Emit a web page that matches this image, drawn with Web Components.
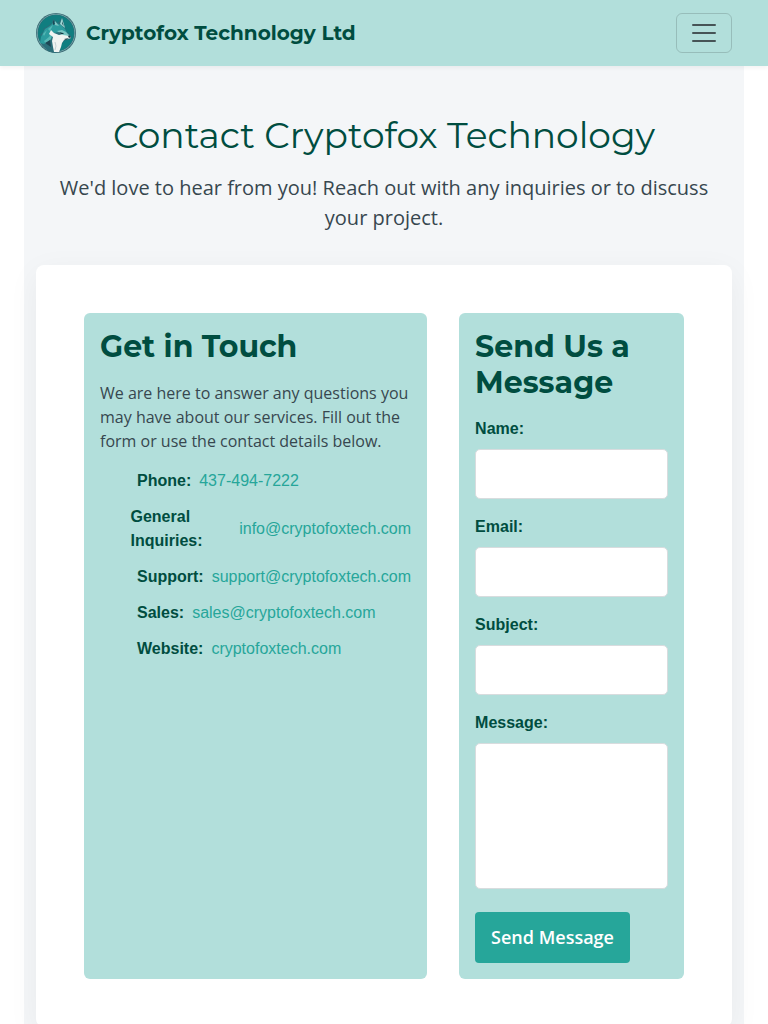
<!DOCTYPE html>
<html lang="en">
<head>
<meta charset="utf-8">
<meta name="viewport" content="width=device-width, initial-scale=1">
<title>Contact Cryptofox Technology</title>
<style>
  :root {
    --mint: #b2dfdb;
    --teal: #26a69a;
    --deep: #004d40;
    --ink: #37474f;
    --heading: Montserrat, "Open Sans", sans-serif;
    --body: "Open Sans", sans-serif;
    --plain: "Liberation Sans", Arial, sans-serif;
  }
  body { margin: 0; background: #fff; color: var(--ink); font: 16px/24px var(--plain); }
</style>
</head>
<body>
<site-header brand="Cryptofox Technology Ltd"></site-header>
<contact-page>
  <span slot="title">Contact Cryptofox Technology</span>
  <span slot="lead">We'd love to hear from you! Reach out with any inquiries or to discuss your project.</span>
  <info-panel heading="Get in Touch">
    <contact-details></contact-details>
  </info-panel>
  <info-panel heading="Send Us a Message">
    <message-form></message-form>
  </info-panel>
</contact-page>

<script>
  const define = (name, html, setup) => {
    const template = document.createElement('template');
    template.innerHTML = html;
    customElements.define(name, class extends HTMLElement {
      constructor() {
        super();
        this.attachShadow({ mode: 'open' }).append(template.content.cloneNode(true));
      }
      connectedCallback() { if (setup) setup(this, this.shadowRoot); }
    });
  };

  define('fox-logo', `
    <style>
      :host { display: block; width: 40px; height: 40px; }
      svg { display: block; width: 100%; height: 100%; }
    </style>
    <svg viewBox="0 0 40 40" role="img" aria-label="Fox logo">
      <circle cx="20" cy="20" r="20" fill="#3b6872"/>
      <circle cx="20" cy="20" r="18.8" fill="none" stroke="#7bb3b6" stroke-width=".8"/>
      <circle cx="20" cy="20" r="18" fill="#107e80"/>
      <path d="M4 27l2-4-2-1 4-4-1-2 5-3 4-3 1-4 5 4 4-5 3 9 2 5 4 4-1 3-6 2-3 4-1 6-5 2-7-2-6-6z" fill="#2b6f7a"/>
      <path d="M5 24l4-8 5-3 4-4 7 3 4 4 2 4-8-1-5 1-3 6-7 5-4-1z" fill="#2c9c9e"/>
      <path d="M8 28l5-4 3-5-1 7-5 5zM7 21l4-4-3 6zM12 16l5-4-3 6z" fill="#56b8b5"/>
      <path d="M9 30l5-3 1 7zM17 7l2 4-2 1z" fill="#1d4654"/>
      <path d="M19 8l4 5-4-1z" fill="#7fc4c3"/>
      <path d="M26 5l3 10-5-4z" fill="#9ed6d3"/>
      <path d="M26 8l2 5-2-2z" fill="#34626d"/>
      <path d="M15 17l3 3 5 2 4-1 7 2 1 2-3 1-4 1-2 3-1 4-2 5-5 0-1-5-1-6 1-4-4-3z" fill="#f0f4f2"/>
      <path d="M21 18l5-1 4 2 4 4-7-1z" fill="#7ac6c3"/>
      <path d="M23 19l4 1 1 1-3 0z" fill="#123844"/>
      <path d="M33 22l2 2-1 1-2-1zM28 26l5-1-3 2z" fill="#163b47"/>
      <path d="M19 29l1 4-1 4" fill="none" stroke="#a5b8bc" stroke-width=".6"/>
    </svg>`);

  define('site-header', `
    <style>
      :host { display: block; position: relative; background: var(--mint); box-shadow: 0 2px 4px rgba(0,0,0,.05); }
      nav { display: flex; align-items: center; justify-content: space-between; box-sizing: border-box;
            max-width: 720px; min-height: 66px; margin: 0 auto; padding: 8px 12px; }
      a { display: flex; align-items: center; gap: 10px; color: var(--deep); text-decoration: none;
          font: 700 20px/30px var(--heading); }
      button { display: flex; align-items: center; justify-content: center; box-sizing: border-box;
               width: 56px; height: 40px; padding: 0; background: transparent;
               border: 1px solid rgba(0,0,0,.15); border-radius: 6px; }
      svg { width: 30px; height: 30px; }
    </style>
    <nav aria-label="Main">
      <a href="#"><fox-logo></fox-logo><span class="brand"></span></a>
      <button type="button" aria-label="Toggle navigation">
        <svg viewBox="0 0 30 30" aria-hidden="true"><path d="M4 7h22M4 15h22M4 23h22" fill="none" stroke="rgba(33,37,41,.75)" stroke-width="2" stroke-linecap="round"/></svg>
      </button>
    </nav>`, (host, root) => {
      root.querySelector('.brand').textContent = host.getAttribute('brand');
    });

  define('contact-page', `
    <style>
      :host { display: block; }
      main { box-sizing: border-box; max-width: 720px; margin: 0 auto; padding: 48px 12px; background: #f4f6f8; }
      header { text-align: center; padding: 0 16px; margin-bottom: 32px; }
      h1 { margin: 0 0 16px; color: var(--deep); font: 400 36px/43px var(--heading); }
      p { margin: 0; font: 400 20px/30px var(--body); }
      section { display: grid; grid-template-columns: 1fr 1fr; gap: 32px; padding: 48px;
                background: #fff; border-radius: 8px; box-shadow: 0 8px 32px rgba(0,0,0,.05); }
    </style>
    <main>
      <header>
        <h1><slot name="title"></slot></h1>
        <p><slot name="lead"></slot></p>
      </header>
      <section><slot></slot></section>
    </main>`);

  define('info-panel', `
    <style>
      :host { display: block; padding: 16px; background: var(--mint); border-radius: 6px; }
      h2 { margin: 0 0 16px; color: var(--deep); font: 700 30px/36px var(--heading); }
    </style>
    <h2></h2>
    <slot></slot>`, (host, root) => {
      root.querySelector('h2').textContent = host.getAttribute('heading');
    });

  define('contact-details', `
    <style>
      :host { display: block; }
      p { margin: 0 0 16px; font: 400 16px/24px var(--body); }
      ul { display: flex; flex-direction: column; gap: 12px; margin: 0; padding: 0; list-style: none; }
      li { display: flex; align-items: center; }
      i { width: 25px; margin-right: 12px; }
      strong { margin-right: 8px; color: var(--deep); }
      a { color: var(--teal); text-decoration: none; }
      .phone { white-space: nowrap; }
    </style>
    <p>We are here to answer any questions you may have about our services. Fill out the form or use the contact details below.</p>
    <ul>
      <li><i></i><strong>Phone:</strong><a class="phone" href="tel:437-494-7222">437-494-7222</a></li>
      <li><i></i><strong>General Inquiries:</strong><a href="mailto:info@cryptofoxtech.com">info@cryptofoxtech.com</a></li>
      <li><i></i><strong>Support:</strong><a href="mailto:support@cryptofoxtech.com">support@cryptofoxtech.com</a></li>
      <li><i></i><strong>Sales:</strong><a href="mailto:sales@cryptofoxtech.com">sales@cryptofoxtech.com</a></li>
      <li><i></i><strong>Website:</strong><a href="#">cryptofoxtech.com</a></li>
    </ul>`);

  define('message-form', `
    <style>
      :host { display: block; }
      form { display: flex; flex-direction: column; }
      label { margin-bottom: 8px; color: var(--deep); font-weight: 700; }
      input, textarea { display: block; box-sizing: border-box; width: 100%; min-width: 0; margin: 0 0 16px; padding: 12px;
                        background: #fff; border: 1px solid #d8dcde; border-radius: 5px; font: 16px/24px var(--plain); }
      input { height: 50px; }
      textarea { height: 146px; margin-bottom: 23px; resize: none; }
      button { align-self: flex-start; padding: 12px 16px; color: #fff; background: var(--teal);
               border: 0; border-radius: 4px; font: 600 18px/27px var(--body); }
    </style>
    <form>
      <label for="name">Name:</label><input id="name" type="text">
      <label for="email">Email:</label><input id="email" type="email">
      <label for="subject">Subject:</label><input id="subject" type="text">
      <label for="message">Message:</label><textarea id="message"></textarea>
      <button type="submit">Send Message</button>
    </form>`);
</script>
</body>
</html>
